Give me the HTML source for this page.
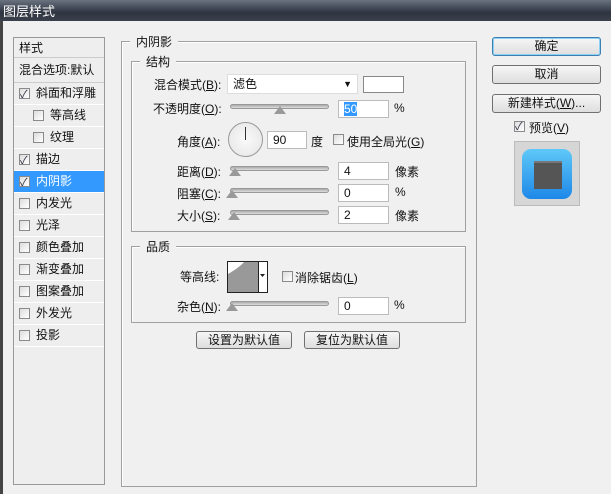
<!DOCTYPE html>
<html><head><meta charset="utf-8"><style>
*{box-sizing:border-box;margin:0;padding:0}
body{width:611px;height:494px;overflow:hidden;background:#f0f0f0;font-family:"Liberation Sans","Noto Sans CJK SC",sans-serif;font-size:12px;color:#111;position:relative}
.a{position:absolute;white-space:nowrap}
.title{left:0;top:0;width:611px;height:21px;background:linear-gradient(#6a7280,#2e3440 60%,#3a404c);color:#fff;font-size:13px;padding:1px 0 0 3px}
.fs{position:absolute;border:1px solid #a0a0a0;box-shadow:1px 1px 0 #fff inset}
.leg{position:absolute;background:#f0f0f0;padding:0 6px;top:-9px;font-size:12px}
.cb{position:absolute;width:11px;height:11px;border:1px solid #8a8a8a;background:linear-gradient(135deg,#ddd,#fff)}
.cb.c::after{content:"✓";position:absolute;left:0;top:-4px;font-size:11px;color:#334}
.btn{position:absolute;border:1px solid #707070;border-radius:3px;background:linear-gradient(#f6f6f6,#dedede);text-align:center;font-size:12px;line-height:16px}
.inp{position:absolute;background:#fff;border:1px solid #bbb;height:18px;padding-left:5px;line-height:16px}
.sl{position:absolute;height:5px;border:1px solid #999;border-radius:3px;background:linear-gradient(#aaa,#ddd)}
.th{position:absolute;width:0;height:0;border-left:6px solid transparent;border-right:6px solid transparent;border-bottom:8px solid #999}
.row{position:absolute;left:0;width:90px;height:22px;border-bottom:1px solid #fff;padding-left:22px;line-height:21px}
</style></head><body>
<div class="a title">图层样式</div>
<div class="a" style="left:0;top:21px;width:3px;height:473px;background:#444"></div>
<!-- left list -->
<div class="a" style="left:13px;top:37px;width:92px;height:448px;border:1px solid #999;background:#eeeeee">
 <div class="row" style="top:0;padding-left:5px;height:20px;border-bottom:1px solid #ccc">样式</div>
 <div class="row" style="top:20px;padding-left:5px;height:25px;line-height:25px;border-bottom:1px solid #ccc">混合选项:默认</div>
 <div class="row" style="top:45px"><span class="cb c" style="left:5px;top:5px"></span>斜面和浮雕</div>
 <div class="row" style="top:67px;padding-left:36px"><span class="cb" style="left:19px;top:5px"></span>等高线</div>
 <div class="row" style="top:89px;padding-left:36px"><span class="cb" style="left:19px;top:5px"></span>纹理</div>
 <div class="row" style="top:111px"><span class="cb c" style="left:5px;top:5px"></span>描边</div>
 <div class="row" style="top:133px;background:#3399ff;color:#fff"><span class="cb c" style="left:5px;top:5px"></span>内阴影</div>
 <div class="row" style="top:155px"><span class="cb" style="left:5px;top:5px"></span>内发光</div>
 <div class="row" style="top:177px"><span class="cb" style="left:5px;top:5px"></span>光泽</div>
 <div class="row" style="top:199px"><span class="cb" style="left:5px;top:5px"></span>颜色叠加</div>
 <div class="row" style="top:221px"><span class="cb" style="left:5px;top:5px"></span>渐变叠加</div>
 <div class="row" style="top:243px"><span class="cb" style="left:5px;top:5px"></span>图案叠加</div>
 <div class="row" style="top:265px"><span class="cb" style="left:5px;top:5px"></span>外发光</div>
 <div class="row" style="top:287px"><span class="cb" style="left:5px;top:5px"></span>投影</div>
</div>
<!-- main -->
<div class="fs" style="left:121px;top:41px;width:356px;height:446px"><span class="leg" style="left:8px">内阴影</span></div>
<div class="fs" style="left:131px;top:61px;width:335px;height:171px"><span class="leg" style="left:8px">结构</span></div>
<div class="fs" style="left:131px;top:246px;width:335px;height:77px"><span class="leg" style="left:8px">品质</span></div>

<div class="a" style="left:154px;top:76px">混合模式(<u>B</u>):</div>
<div class="inp" style="left:227px;top:74px;width:131px;height:20px;border-color:#ddd;line-height:18px">滤色<span style="position:absolute;right:5px;top:0;font-size:9px">▼</span></div>
<div class="a" style="left:363px;top:76px;width:41px;height:17px;border:1px solid #888;background:#fff"></div>

<div class="a" style="left:153px;top:100px">不透明度(<u>O</u>):</div>
<div class="sl" style="left:230px;top:104px;width:99px"></div><div class="th" style="left:274px;top:106px"></div>
<div class="inp" style="left:338px;top:100px;width:51px"><span style="background:#3399ff;color:#fff">50</span></div>
<div class="a" style="left:394px;top:101px">%</div>

<div class="a" style="left:177px;top:133px">角度(<u>A</u>):</div>
<div class="a" style="left:228px;top:122px;width:35px;height:35px;border-radius:50%;border:1px solid #999;background:radial-gradient(#fafafa,#e4e4e4)"></div>
<div class="a" style="left:245px;top:127px;width:1px;height:13px;background:#333"></div>
<div class="inp" style="left:267px;top:131px;width:40px">90</div>
<div class="a" style="left:311px;top:133px">度</div>
<span class="cb" style="left:333px;top:134px"></span>
<div class="a" style="left:347px;top:133px">使用全局光(<u>G</u>)</div>

<div class="a" style="left:177px;top:163px">距离(<u>D</u>):</div>
<div class="sl" style="left:230px;top:166px;width:99px"></div><div class="th" style="left:229px;top:168px"></div>
<div class="inp" style="left:338px;top:162px;width:51px">4</div><div class="a" style="left:395px;top:163px">像素</div>

<div class="a" style="left:177px;top:185px">阻塞(<u>C</u>):</div>
<div class="sl" style="left:230px;top:188px;width:99px"></div><div class="th" style="left:226px;top:190px"></div>
<div class="inp" style="left:338px;top:184px;width:51px">0</div><div class="a" style="left:395px;top:185px">%</div>

<div class="a" style="left:177px;top:207px">大小(<u>S</u>):</div>
<div class="sl" style="left:230px;top:210px;width:99px"></div><div class="th" style="left:228px;top:212px"></div>
<div class="inp" style="left:338px;top:206px;width:51px">2</div><div class="a" style="left:395px;top:207px">像素</div>

<div class="a" style="left:180px;top:268px">等高线:</div>
<div class="a" style="left:227px;top:261px;width:41px;height:32px;border:1px solid #222;background:#fff">
 <svg width="39" height="30" style="position:absolute;left:0;top:0"><path d="M0 30 L0 12 Q12 5 16 0 L30 0 L30 30Z" fill="#999"/><line x1="30.5" y1="0" x2="30.5" y2="30" stroke="#222"/><path d="M32 12h5l-2.5 3z" fill="#222"/></svg>
</div>
<span class="cb" style="left:282px;top:271px"></span>
<div class="a" style="left:295px;top:269px">消除锯齿(<u>L</u>)</div>

<div class="a" style="left:177px;top:298px">杂色(<u>N</u>):</div>
<div class="sl" style="left:230px;top:301px;width:99px"></div><div class="th" style="left:226px;top:303px"></div>
<div class="inp" style="left:338px;top:297px;width:51px">0</div><div class="a" style="left:394px;top:298px">%</div>

<div class="btn" style="left:196px;top:331px;width:96px;height:18px">设置为默认值</div>
<div class="btn" style="left:304px;top:331px;width:96px;height:18px">复位为默认值</div>

<!-- right -->
<div class="btn" style="left:492px;top:37px;width:109px;height:19px;border-color:#3c7fb1;box-shadow:0 0 0 1px #8fd0f5 inset">确定</div>
<div class="btn" style="left:492px;top:65px;width:109px;height:19px">取消</div>
<div class="btn" style="left:492px;top:94px;width:109px;height:19px">新建样式(<u>W</u>)...</div>
<span class="cb c" style="left:514px;top:121px"></span>
<div class="a" style="left:529px;top:119px">预览(<u>V</u>)</div>
<div class="a" style="left:514px;top:141px;width:66px;height:65px;background:#d6d6d6;border:1px solid #bbb">
 <div class="a" style="left:7px;top:7px;width:50px;height:50px;border-radius:9px;background:linear-gradient(#5fc8f8,#1e88e8)"></div>
 <div class="a" style="left:19px;top:19px;width:28px;height:28px;background:#555;border-top:2px solid #777"></div>
</div>
</body></html>
